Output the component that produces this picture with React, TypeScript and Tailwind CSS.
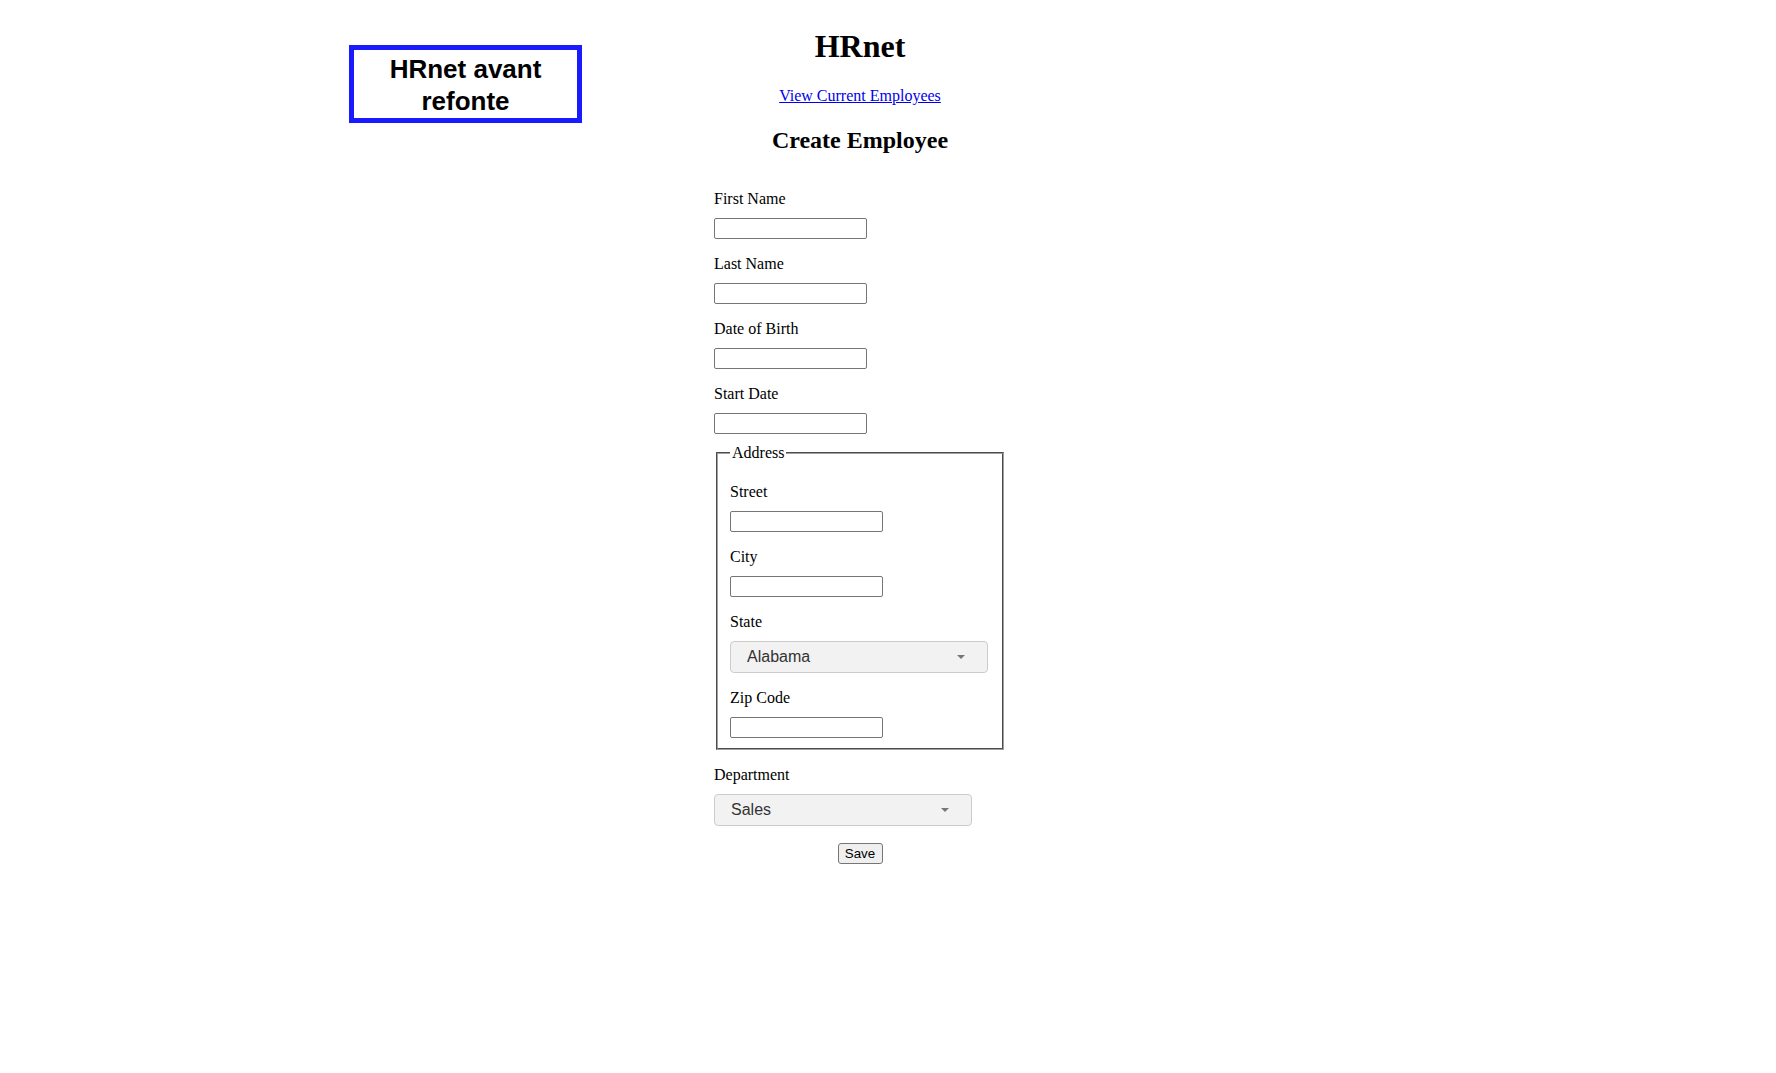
import React from "react";

const serif = { fontFamily: '"Liberation Serif", "Times New Roman", serif' };

function Field({ label, first }: { label: string; first?: boolean }) {
  return (
    <div className="flex flex-col items-start">
      <label className={`block text-[16px] leading-[18px] ${first ? "mt-[36px]" : "mt-[16px]"}`}>{label}</label>
      <input
        type="text"
        className="mt-[10px] w-[153px] h-[21px] bg-white border border-[#767676] rounded-[2px] px-[2px] text-[13px] font-['Liberation_Sans',Arial,sans-serif]"
      />
    </div>
  );
}

function FakeSelect({ value }: { value: string }) {
  return (
    <div className="mt-[10px] w-[258px] h-[32px] flex items-center justify-between pl-[16px] pr-[22px] bg-[#f2f2f2] border border-[#cccccc] rounded-[4px] text-[16px] text-[#333333] font-['Liberation_Sans',Arial,sans-serif] cursor-default">
      <span>{value}</span>
      <span className="w-0 h-0 border-l-[4px] border-r-[4px] border-t-[4px] border-l-transparent border-r-transparent border-t-[#777777]" />
    </div>
  );
}

export default function App() {
  return (
    <div className="flex items-start min-h-[1073px] bg-white text-black" style={serif}>
      <div className="ml-[349px] mt-[45px] w-[233px] h-[78px] shrink-0 border-[5px] border-[#1a1aff] pt-[3px] text-center text-[26px] leading-[32px] font-bold font-['Liberation_Sans',Arial,sans-serif]">
        HRnet avant
        <br />
        refonte
      </div>
      <main className="w-[556px] flex flex-col items-center text-center">
        <h1 className="mt-[28px] text-[32px] leading-[37px] font-bold">HRnet</h1>
        <a href="#" className="mt-[22px] text-[16px] leading-[18px] text-[#0000ee] underline">
          View Current Employees
        </a>
        <h2 className="mt-[21px] text-[24px] leading-[28px] font-bold">Create Employee</h2>
        <form className="w-[292px] text-left flex flex-col" onSubmit={(e) => e.preventDefault()}>
          <Field label="First Name" first />
          <Field label="Last Name" />
          <Field label="Date of Birth" />
          <Field label="Start Date" />
          <fieldset className="mt-[10px] mx-[2px] border-2 [border-style:groove] border-[#a0a0a0] px-[12px] pt-[5px] pb-[10px]">
            <legend className="px-[2px] text-[16px] leading-[18px]">Address</legend>
            <Field label="Street" />
            <Field label="City" />
            <label className="block mt-[16px] text-[16px] leading-[18px]">State</label>
            <FakeSelect value="Alabama" />
            <Field label="Zip Code" />
          </fieldset>
          <label className="block mt-[16px] text-[16px] leading-[18px]">Department</label>
          <FakeSelect value="Sales" />
          <div className="flex justify-center mt-[17px]">
            <button
              type="submit"
              className="w-[45px] h-[21px] bg-[#efefef] border border-[#767676] rounded-[3px] text-[13.33px] leading-[15px] text-black font-['Liberation_Sans',Arial,sans-serif]"
            >
              Save
            </button>
          </div>
        </form>
      </main>
    </div>
  );
}
